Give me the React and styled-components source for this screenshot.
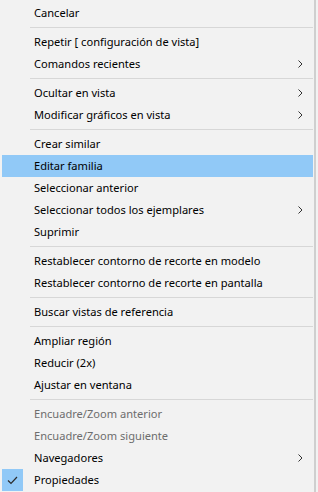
import React from "react";
import styled, { createGlobalStyle } from "styled-components";

const GlobalStyle = createGlobalStyle`
    html, body {
        margin: 0;
        padding: 0;
        background: #f2f2f2;
    }
`;

const items = [
    { label: "Cancelar" },
    { sep: true },
    { label: "Repetir [ configuración de vista]" },
    { label: "Comandos recientes", sub: true },
    { sep: true },
    { label: "Ocultar en vista", sub: true },
    { label: "Modificar gráficos en vista", sub: true },
    { sep: true },
    { label: "Crear similar" },
    { label: "Editar familia", active: true },
    { label: "Seleccionar anterior" },
    { label: "Seleccionar todos los ejemplares", sub: true },
    { label: "Suprimir" },
    { sep: true },
    { label: "Restablecer contorno de recorte en modelo" },
    { label: "Restablecer contorno de recorte en pantalla" },
    { sep: true },
    { label: "Buscar vistas de referencia" },
    { sep: true },
    { label: "Ampliar región" },
    { label: "Reducir (2x)" },
    { label: "Ajustar en ventana" },
    { sep: true },
    { label: "Encuadre/Zoom anterior", disabled: true },
    { label: "Encuadre/Zoom siguiente", disabled: true },
    { label: "Navegadores", sub: true },
    { label: "Propiedades", checked: true },
];

function Chevron() {
    return (
        <svg width="5" height="8" viewBox="0 0 5 8">
            <path d="M0.5 0.5 L4 4 L0.5 7.5" fill="none" stroke="#333" strokeWidth="1" />
        </svg>
    );
}

function Check() {
    return (
        <svg width="11" height="9" viewBox="0 0 11 9">
            <path d="M1 4.5 L4 7.5 L10 1" fill="none" stroke="#2b2b2b" strokeWidth="1.2" />
        </svg>
    );
}

export default function App() {
    return (
        <>
            <GlobalStyle />
            <Menu>
                {items.map((item, i) =>
                    item.sep ? (
                        <Separator key={i} />
                    ) : (
                        <Row key={i} $active={item.active} $disabled={item.disabled}>
                            <CheckCell $checked={item.checked}>
                                {item.checked && <Check />}
                            </CheckCell>
                            <Label>{item.label}</Label>
                            <Arrow>{item.sub && <Chevron />}</Arrow>
                        </Row>
                    )
                )}
            </Menu>
        </>
    );
}

const Menu = styled.div`
    width: 316px;
    height: 492px;
    box-sizing: border-box;
    background: #f2f2f2;
    border-right: 2px solid #cfcfcf;
    padding: 2px 1px 0 2px;
    font-family: "Noto Sans", "Open Sans", sans-serif;
    font-size: 11.1px;
    display: flex;
    flex-direction: column;
`;

const Row = styled.div`
    height: 22px;
    display: flex;
    align-items: center;
    background: ${(p) => (p.$active ? "#91c9f7" : "transparent")};
    color: ${(p) => (p.$disabled ? "#6d6d6d" : "#000")};
`;

const CheckCell = styled.div`
    width: 21px;
    height: 22px;
    margin-right: 11px;
    display: flex;
    align-items: center;
    justify-content: center;
    background: ${(p) => (p.$checked ? "#91c9f7" : "transparent")};
`;

const Label = styled.span`
    flex: 1;
    white-space: nowrap;
    line-height: 22px;
`;

const Arrow = styled.div`
    width: 15px;
    display: flex;
    align-items: center;
    justify-content: flex-start;
`;

const Separator = styled.div`
    height: 7px;
    display: flex;
    align-items: center;
    padding-left: 28px;
    &::after {
        content: "";
        flex: 1;
        height: 1px;
        background: #d7d7d7;
    }
`;
